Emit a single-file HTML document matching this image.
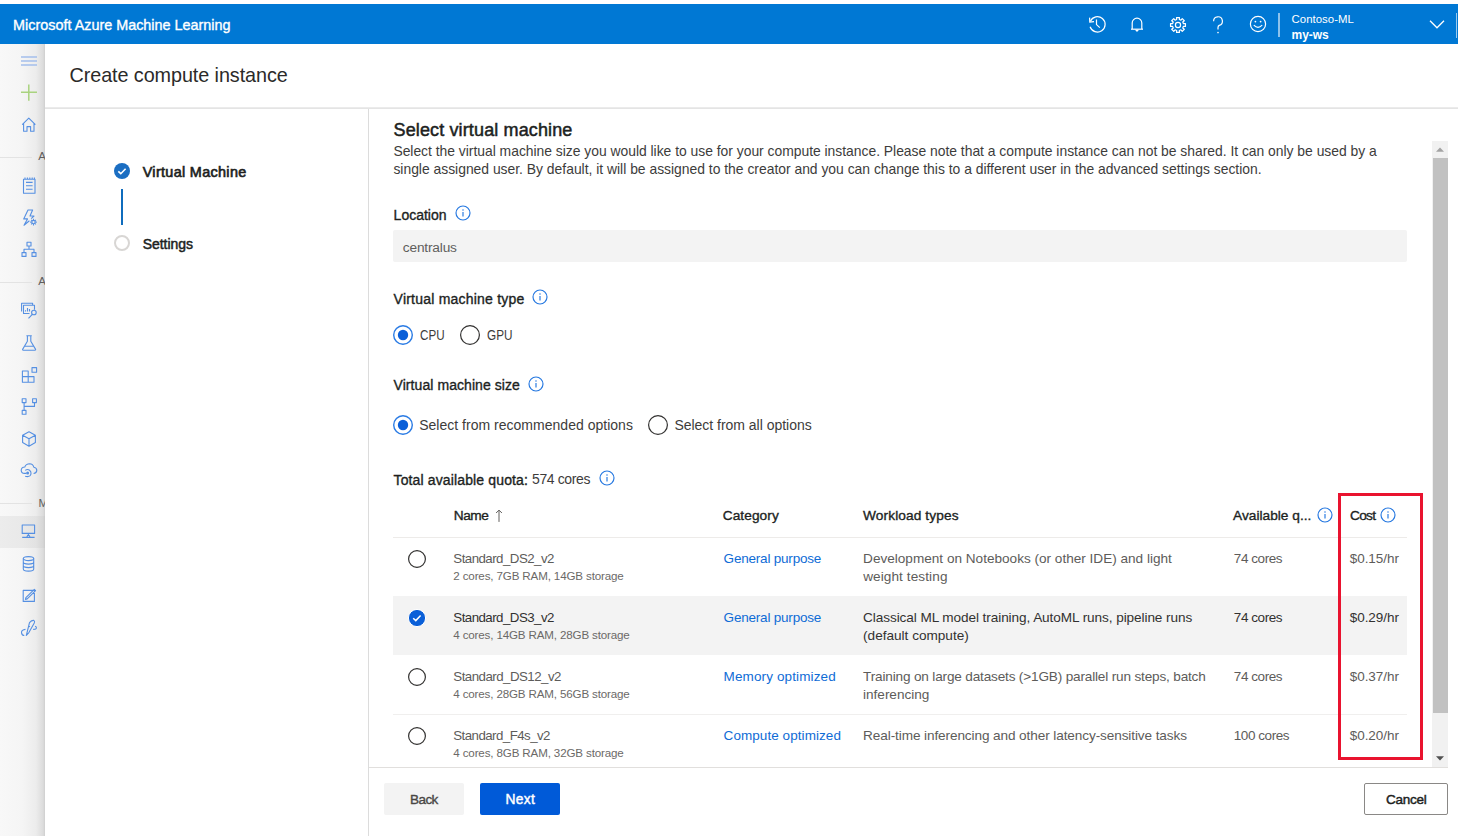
<!DOCTYPE html>
<html><head><meta charset="utf-8">
<style>
*{box-sizing:border-box;margin:0;padding:0}
html,body{width:1458px;height:836px;overflow:hidden;background:#fff;font-family:"Liberation Sans",sans-serif;color:#323130}
.t{position:absolute;white-space:nowrap}
.b{position:absolute}
svg{position:absolute;overflow:visible}
</style></head><body>
<div class="b" style="left:0;top:4px;width:1458px;height:40px;background:#0078d4"></div>
<div class="t" style="left:13.10px;top:18.31px;font-size:14.4px;line-height:14.4px;letter-spacing:-0.004px;-webkit-text-stroke:0.35px #fff;color:#fff;">Microsoft Azure Machine Learning</div>
<svg style="left:1087px;top:13.4px" width="22" height="22" viewBox="0 0 22 22" fill="none" stroke="#fff" stroke-width="1.2">
<path d="M3.4 8.2 A7.7 7.7 0 1 1 3.1 13.8"/><path d="M2.6 4.6 L2.8 9 L7 8.6" stroke-linejoin="miter"/><path d="M9.5 6.5 V11.6 L12.8 14.6"/></svg>
<svg style="left:1129px;top:15px" width="16" height="20" viewBox="0 0 16 20" fill="none" stroke="#fff" stroke-width="1.2">
<path d="M3.2 14 V8 A4.8 4.8 0 0 1 12.8 8 V14"/><path d="M2 14.2 H14"/><path d="M6.6 14.6 L8 16.2 L9.4 14.6"/></svg>
<svg style="left:1168.3px;top:14.8px" width="20" height="20" viewBox="0 0 20 20" fill="none" stroke="#fff" stroke-width="1.2" stroke-linejoin="round">
<path d="M17.46 8.55 L17.46 11.45 L15.45 11.31 L14.77 12.93 L16.30 14.25 L14.25 16.30 L12.93 14.77 L11.31 15.45 L11.45 17.46 L8.55 17.46 L8.69 15.45 L7.07 14.77 L5.75 16.30 L3.70 14.25 L5.23 12.93 L4.55 11.31 L2.54 11.45 L2.54 8.55 L4.55 8.69 L5.23 7.07 L3.70 5.75 L5.75 3.70 L7.07 5.23 L8.69 4.55 L8.55 2.54 L11.45 2.54 L11.31 4.55 L12.93 5.23 L14.25 3.70 L16.30 5.75 L14.77 7.07 L15.45 8.69 Z"/><circle cx="10" cy="10" r="2.6"/></svg>
<svg style="left:1210px;top:15px" width="16" height="20" viewBox="0 0 16 20" fill="none" stroke="#fff" stroke-width="1.2">
<path d="M3.6 6.2 A4.4 4.4 0 1 1 9.2 10.4 Q8 11 8 12.6 V14.6"/><circle cx="8" cy="17.6" r="0.8" fill="#fff" stroke="none"/></svg>
<svg style="left:1248.2px;top:14.2px" width="20" height="20" viewBox="0 0 20 20" fill="none" stroke="#fff" stroke-width="1.2">
<circle cx="10" cy="10" r="7.6"/><circle cx="7.4" cy="7.6" r="0.9" fill="#fff" stroke="none"/><circle cx="12.6" cy="7.6" r="0.9" fill="#fff" stroke="none"/><path d="M5.8 11.2 Q10 15.4 14.2 11.2"/></svg>
<div class="b" style="left:1278px;top:12.5px;width:1.5px;height:24px;background:rgba(255,255,255,0.55)"></div>
<div class="t" style="left:1291.60px;top:14.25px;font-size:11.4px;line-height:11.4px;letter-spacing:0.022px;color:#fff;">Contoso-ML</div>
<div class="t" style="left:1291.60px;top:29.14px;font-size:12px;line-height:12px;letter-spacing:-0.088px;font-weight:bold;color:#fff;">my-ws</div>
<svg style="left:1428px;top:18px" width="18" height="12" viewBox="0 0 18 12" fill="none" stroke="#fff" stroke-width="1.3"><path d="M2 2.8 L9 9.8 L16 2.8"/></svg>
<div class="b" style="left:1456px;top:12.5px;width:1.2px;height:25px;background:rgba(255,255,255,0.6)"></div>
<div class="b" style="left:0;top:0;width:45px;height:836px;overflow:hidden">
<div class="b" style="left:0;top:44px;width:45px;height:792px;background:linear-gradient(to right,#f8f8f8 0px,#f5f5f5 22px,#ececec 36px,#dcdcdc 43px,#cfcfcf 45px)"></div>
<div class="b" style="left:0;top:516px;width:45px;height:32px;background:linear-gradient(to right,#ececec 0px,#e9e9e9 22px,#e2e2e2 36px,#d6d6d6 43px,#cacaca 45px)"></div>
<div class="b" style="left:0;top:157px;width:32px;height:1px;background:#e3e3e3"></div>
<div class="b" style="left:0;top:282px;width:32px;height:1px;background:#e3e3e3"></div>
<div class="b" style="left:0;top:503px;width:32px;height:1px;background:#e3e3e3"></div>
<div class="t" style="left:38.20px;top:151.07px;font-size:11.5px;line-height:11.5px;letter-spacing:0.000px;color:#605e5c;">A</div>
<div class="t" style="left:38.20px;top:276.07px;font-size:11.5px;line-height:11.5px;letter-spacing:0.000px;color:#605e5c;">A</div>
<div class="t" style="left:38.60px;top:497.77px;font-size:11.5px;line-height:11.5px;letter-spacing:0.000px;color:#605e5c;">M</div>
<svg style="left:20px;top:52px" width="18" height="16" viewBox="0 0 18 16" stroke="#a4bfeb" stroke-width="1.5"><path d="M1 4.9 H17 M1 8.9 H17 M1 12.9 H17"/></svg>
<svg style="left:20px;top:84px" width="18" height="18" viewBox="0 0 18 18" stroke="#a9d37f" stroke-width="1.5"><path d="M1 8.3 H17 M8.8 0.6 V16.7"/></svg>
<svg style="left:20px;top:116px" width="18" height="18" viewBox="0 0 18 18" fill="none" stroke="#5690e2" stroke-width="1.1" stroke-linejoin="round"><path d="M2.2 8.6 L8.8 2.2 L15.4 8.6 M3.6 7.4 V15.2 H7 V10.6 H10.6 V15.2 H14 V7.4"/></svg>
<svg style="left:20px;top:176px" width="18" height="20" viewBox="0 0 18 20" fill="none" stroke="#5690e2" stroke-width="1.1" stroke-linejoin="round"><path d="M3.5 3.2 H15 V17.2 H3.5 Z M6 6.4 H12.6 M6 9.8 H12.6 M6 13.2 H12.6 M5 1.6 V3.2 M7.4 1.6 V3.2 M9.8 1.6 V3.2 M12.2 1.6 V3.2 M14.4 1.6 V3.2"/></svg>
<svg style="left:20px;top:208px" width="20" height="20" viewBox="0 0 20 20" fill="none" stroke="#5690e2" stroke-width="1.1" stroke-linejoin="round"><path d="M11.2 10.6 L14 8 H10 L12.6 2 H8 L3.7 10.9 H7.5 L4 17.2 L9.4 12.8"/><circle cx="13.5" cy="14.1" r="1.7"/><path d="M13.5 10.8 V12.2 M13.5 16 V17.4 M10.2 14.1 H11.6 M15.4 14.1 H16.8 M11.2 11.8 L12.2 12.8 M14.8 15.4 L15.8 16.4 M11.2 16.4 L12.2 15.4 M14.8 12.8 L15.8 11.8"/></svg>
<svg style="left:20px;top:240px" width="18" height="18" viewBox="0 0 18 18" fill="none" stroke="#5690e2" stroke-width="1.1" stroke-linejoin="round"><path d="M7 2.2 H11 V6 H7 Z M2 12.6 H6 V16.4 H2 Z M12 12.6 H16 V16.4 H12 Z M9 6 V9.2 M4 12.6 V9.2 H14 V12.6"/></svg>
<svg style="left:20px;top:301px" width="19" height="19" viewBox="0 0 19 19" fill="none" stroke="#5690e2" stroke-width="1.1" stroke-linejoin="round"><path d="M1.6 10.4 V2.3 H12.6 V4.2 M9.5 12.5 H3.5 V4.3 H14.5 V8.8 M5.5 10.5 V9.2 M7.5 10.5 V7 M9.5 10.5 V8.1"/><circle cx="13.9" cy="11.5" r="2.3"/><path d="M12.3 13.3 L8.5 17.3"/></svg>
<svg style="left:20px;top:334px" width="18" height="18" viewBox="0 0 18 18" fill="none" stroke="#5690e2" stroke-width="1.1" stroke-linejoin="round"><path d="M6.4 1.8 H11.8 M7.4 1.8 V7.2 L2.6 15.4 Q2.4 16.2 3.2 16.2 H15 Q15.8 16.2 15.6 15.4 L10.8 7.2 V1.8 M4.6 12.2 H13.6"/></svg>
<svg style="left:20px;top:366px" width="18" height="18" viewBox="0 0 18 18" fill="none" stroke="#5690e2" stroke-width="1.1" stroke-linejoin="round"><path d="M2.4 5 H8.2 V16.2 H2.4 Z M2.4 10.6 H14 V16.2 H8.2 M12 1.6 H16.6 V6.2 H12 Z"/></svg>
<svg style="left:20px;top:397px" width="18" height="19" viewBox="0 0 18 19" fill="none" stroke="#5690e2" stroke-width="1.1" stroke-linejoin="round"><path d="M2.2 1.8 H6 V5.6 H2.2 Z M12.6 1.8 H16.4 V5.6 H12.6 Z M2.2 13.4 H6 V17.2 H2.2 Z M4.1 5.6 V13.4 M4.1 9.4 H14.5 V5.6"/></svg>
<svg style="left:20px;top:430px" width="18" height="18" viewBox="0 0 18 18" fill="none" stroke="#5690e2" stroke-width="1.1" stroke-linejoin="round"><path d="M9 1.8 L15.4 5.2 V12.6 L9 16.2 L2.6 12.6 V5.2 Z M2.6 5.2 L9 8.8 L15.4 5.2 M9 8.8 V16.2"/></svg>
<svg style="left:20px;top:461px" width="19" height="19" viewBox="0 0 19 19" fill="none" stroke="#5690e2" stroke-width="1.1" stroke-linejoin="round"><path d="M6.3 12.4 H4.6 Q1.2 12.2 1.2 9.2 Q1.4 6.2 4.8 6 Q6 2.8 9.6 2.8 Q13 2.9 13.8 6.2 Q16.8 6.6 16.8 9.4 Q16.6 12.3 13.6 12.5"/><path d="M5.2 9.4 Q7.4 7.8 9.6 9.2 Q11.4 10.6 11 13 Q10.4 15.6 7.4 15.6 Q6 15.6 5.2 15.2"/><circle cx="7.6" cy="12.1" r="1.5" fill="#5690e2" stroke="none"/></svg>
<svg style="left:20px;top:523px" width="18" height="18" viewBox="0 0 18 18" fill="none" stroke="#5690e2" stroke-width="1.1" stroke-linejoin="round"><path d="M2.2 2 H14.6 V10.4 H2.2 Z M8.4 10.4 V12.4 M6.6 14.4 L7.6 12.4 H9.2 L10.2 14.4 Z M2.2 14.4 H6.6 M10.2 14.4 H14.6"/></svg>
<svg style="left:20px;top:555px" width="18" height="18" viewBox="0 0 18 18" fill="none" stroke="#5690e2" stroke-width="1.1" stroke-linejoin="round"><ellipse cx="8.5" cy="3.6" rx="5.2" ry="2"/><path d="M3.3 3.6 V14 Q3.3 16.1 8.5 16.1 Q13.7 16.1 13.7 14 V3.6 M3.3 7.1 Q3.3 9.1 8.5 9.1 Q13.7 9.1 13.7 7.1 M3.3 10.6 Q3.3 12.6 8.5 12.6 Q13.7 12.6 13.7 10.6"/></svg>
<svg style="left:20px;top:587px" width="18" height="18" viewBox="0 0 18 18" fill="none" stroke="#5690e2" stroke-width="1.1" stroke-linejoin="round"><path d="M3.2 3.4 H14.4 V14.4 H3.2 Z M5.4 12.4 L5.9 10.6 L14.3 2.3 L15.6 3.6 L7.2 11.9 Z"/></svg>
<svg style="left:19px;top:618px" width="20" height="20" viewBox="0 0 20 20" fill="none" stroke="#5690e2" stroke-width="1.1" stroke-linejoin="round"><path d="M7.3 17.5 L10.5 4.6 Q12.6 2.2 14.8 2.4 Q16 3.2 15.4 4.8 L9.9 14.6 Z M9.6 8.2 L11 8.8"/><path d="M6.5 11.4 Q2.5 11.8 2.5 14.6 Q2.8 17.4 5.3 17.5 M14.2 11.4 Q17.6 11.6 17.4 9.6 Q17.2 8.4 16 8.2"/></svg>
</div>
<div class="t" style="left:69.50px;top:65.84px;font-size:19.8px;line-height:19.8px;letter-spacing:-0.074px;color:#2b2a29;">Create compute instance</div>
<div class="b" style="left:45px;top:107px;width:1413px;height:1px;background:#ebebeb"></div>
<div class="b" style="left:45px;top:108px;width:1413px;height:1px;background:#e4e4e4"></div>
<div class="b" style="left:368px;top:109px;width:1px;height:727px;background:#dcdcdc"></div>
<svg style="left:114px;top:162.5px" width="16" height="16" viewBox="0 0 16 16"><circle cx="8" cy="8" r="8" fill="#1b6ec2"/><path d="M4.3 8.3 L6.8 10.7 L11.6 5.7" fill="none" stroke="#fff" stroke-width="1.6"/></svg>
<div class="b" style="left:121px;top:189px;width:2px;height:36px;background:#0f6cbd"></div>
<div class="b" style="left:114px;top:235.4px;width:16px;height:16px;border-radius:50%;border:2px solid #d8d6d4"></div>
<div class="t" style="left:142.70px;top:164.91px;font-size:14.4px;line-height:14.4px;letter-spacing:0.329px;-webkit-text-stroke:0.65px #201f1e;color:#201f1e;">Virtual Machine</div>
<div class="t" style="left:142.70px;top:237.35px;font-size:14px;line-height:14px;letter-spacing:-0.039px;-webkit-text-stroke:0.5px #201f1e;color:#201f1e;">Settings</div>
<div class="t" style="left:393.60px;top:120.86px;font-size:18px;line-height:18px;letter-spacing:0.125px;-webkit-text-stroke:0.5px #201f1e;color:#201f1e;">Select virtual machine</div>
<div class="t" style="left:393.40px;top:144.73px;font-size:13.9px;line-height:13.9px;letter-spacing:-0.017px;color:#3d3c3b;">Select the virtual machine size you would like to use for your compute instance. Please note that a compute instance can not be shared. It can only be used by a</div>
<div class="t" style="left:393.40px;top:162.83px;font-size:13.9px;line-height:13.9px;letter-spacing:-0.007px;color:#3d3c3b;">single assigned user. By default, it will be assigned to the creator and you can change this to a different user in the advanced settings section.</div>
<div class="t" style="left:393.60px;top:207.95px;font-size:14px;line-height:14px;letter-spacing:-0.003px;-webkit-text-stroke:0.35px #201f1e;color:#201f1e;">Location</div>
<svg style="left:455.0px;top:205.0px" width="16" height="16" viewBox="0 0 16 16" fill="none" stroke="#2477e0" stroke-width="1.15"><circle cx="8" cy="8" r="7"/><path d="M8 7 V11.4"/><circle cx="8" cy="4.9" r="0.75" fill="#2477e0" stroke="none"/></svg>
<div class="b" style="left:393px;top:229.5px;width:1014px;height:32px;background:#f3f3f3;border-radius:2px"></div>
<div class="t" style="left:402.80px;top:240.50px;font-size:13.7px;line-height:13.7px;letter-spacing:-0.173px;color:#605e5c;">centralus</div>
<div class="t" style="left:393.60px;top:291.75px;font-size:14px;line-height:14px;letter-spacing:0.216px;-webkit-text-stroke:0.35px #201f1e;color:#201f1e;">Virtual machine type</div>
<svg style="left:532.4px;top:289.3px" width="16" height="16" viewBox="0 0 16 16" fill="none" stroke="#2477e0" stroke-width="1.15"><circle cx="8" cy="8" r="7"/><path d="M8 7 V11.4"/><circle cx="8" cy="4.9" r="0.75" fill="#2477e0" stroke="none"/></svg>
<svg style="left:393.0px;top:324.6px" width="20" height="20" viewBox="0 0 20 20"><circle cx="10" cy="10" r="9.3" fill="#fff" stroke="#2a7be4" stroke-width="1.4"/><circle cx="10" cy="10" r="5.2" fill="#0a5fd8"/></svg>
<div class="t" style="left:419.80px;top:328.72px;font-size:13.8px;line-height:13.8px;letter-spacing:0.000px;color:#3d3c3b;transform:scaleX(0.8438);transform-origin:0.00px 0;">CPU</div>
<svg style="left:460.0px;top:324.6px" width="20" height="20" viewBox="0 0 20 20"><circle cx="10.0" cy="10.0" r="9.4" fill="#fff" stroke="#323130" stroke-width="1.2"/></svg>
<div class="t" style="left:486.80px;top:328.72px;font-size:13.8px;line-height:13.8px;letter-spacing:0.000px;color:#3d3c3b;transform:scaleX(0.8525);transform-origin:0.00px 0;">GPU</div>
<div class="t" style="left:393.50px;top:377.95px;font-size:14px;line-height:14px;letter-spacing:0.073px;-webkit-text-stroke:0.35px #201f1e;color:#201f1e;">Virtual machine size</div>
<svg style="left:528.4px;top:375.8px" width="16" height="16" viewBox="0 0 16 16" fill="none" stroke="#2477e0" stroke-width="1.15"><circle cx="8" cy="8" r="7"/><path d="M8 7 V11.4"/><circle cx="8" cy="4.9" r="0.75" fill="#2477e0" stroke="none"/></svg>
<svg style="left:393.0px;top:415.0px" width="20" height="20" viewBox="0 0 20 20"><circle cx="10" cy="10" r="9.3" fill="#fff" stroke="#2a7be4" stroke-width="1.4"/><circle cx="10" cy="10" r="5.2" fill="#0a5fd8"/></svg>
<div class="t" style="left:419.20px;top:418.25px;font-size:14px;line-height:14px;letter-spacing:0.016px;color:#3d3c3b;">Select from recommended options</div>
<svg style="left:648.0px;top:415.0px" width="20" height="20" viewBox="0 0 20 20"><circle cx="10.0" cy="10.0" r="9.4" fill="#fff" stroke="#323130" stroke-width="1.2"/></svg>
<div class="t" style="left:674.40px;top:418.25px;font-size:14px;line-height:14px;letter-spacing:-0.019px;color:#3d3c3b;">Select from all options</div>
<div class="t" style="left:393.50px;top:472.65px;font-size:14px;line-height:14px;letter-spacing:0.137px;-webkit-text-stroke:0.35px #201f1e;color:#201f1e;">Total available quota:</div>
<div class="t" style="left:532.00px;top:472.35px;font-size:14px;line-height:14px;letter-spacing:-0.387px;color:#3d3c3b;">574 cores</div>
<svg style="left:598.5px;top:470.0px" width="16" height="16" viewBox="0 0 16 16" fill="none" stroke="#2477e0" stroke-width="1.15"><circle cx="8" cy="8" r="7"/><path d="M8 7 V11.4"/><circle cx="8" cy="4.9" r="0.75" fill="#2477e0" stroke="none"/></svg>
<div class="t" style="left:453.70px;top:508.60px;font-size:13.7px;line-height:13.7px;letter-spacing:-0.415px;-webkit-text-stroke:0.35px #201f1e;color:#201f1e;">Name</div>
<svg style="left:494px;top:508px" width="10" height="16" viewBox="0 0 10 16" fill="none" stroke="#605e5c" stroke-width="1"><path d="M5 2.2 V13.9 M2.1 5 L5 2.1 L7.9 5"/></svg>
<div class="t" style="left:722.70px;top:508.60px;font-size:13.7px;line-height:13.7px;letter-spacing:0.073px;-webkit-text-stroke:0.35px #201f1e;color:#201f1e;">Category</div>
<div class="t" style="left:863.10px;top:508.60px;font-size:13.7px;line-height:13.7px;letter-spacing:0.101px;-webkit-text-stroke:0.35px #201f1e;color:#201f1e;">Workload types</div>
<div class="t" style="left:1233.00px;top:508.60px;font-size:13.7px;line-height:13.7px;letter-spacing:0.016px;-webkit-text-stroke:0.35px #201f1e;color:#201f1e;">Available q...</div>
<svg style="left:1317.0px;top:507.3px" width="16" height="16" viewBox="0 0 16 16" fill="none" stroke="#2477e0" stroke-width="1.15"><circle cx="8" cy="8" r="7"/><path d="M8 7 V11.4"/><circle cx="8" cy="4.9" r="0.75" fill="#2477e0" stroke="none"/></svg>
<div class="t" style="left:1350.00px;top:508.60px;font-size:13.7px;line-height:13.7px;letter-spacing:-0.718px;-webkit-text-stroke:0.35px #201f1e;color:#201f1e;">Cost</div>
<svg style="left:1379.6px;top:507.3px" width="16" height="16" viewBox="0 0 16 16" fill="none" stroke="#2477e0" stroke-width="1.15"><circle cx="8" cy="8" r="7"/><path d="M8 7 V11.4"/><circle cx="8" cy="4.9" r="0.75" fill="#2477e0" stroke="none"/></svg>
<div class="b" style="left:393px;top:537px;width:1014px;height:1px;background:#edebe9"></div>
<div class="b" style="left:393px;top:596px;width:1014px;height:59px;background:#f3f3f3"></div>
<div class="b" style="left:393px;top:714px;width:1014px;height:1px;background:#f0efee"></div>
<svg style="left:408.0px;top:549.8px" width="18" height="18" viewBox="0 0 18 18"><circle cx="9.0" cy="9.0" r="8.4" fill="#fff" stroke="#323130" stroke-width="1.2"/></svg>
<div class="t" style="left:453.30px;top:551.84px;font-size:13.3px;line-height:13.3px;letter-spacing:-0.535px;color:#5d5c5a;">Standard_DS2_v2</div>
<div class="t" style="left:453.30px;top:569.98px;font-size:11.6px;line-height:11.6px;letter-spacing:-0.142px;color:#6b6967;">2 cores, 7GB RAM, 14GB storage</div>
<div class="t" style="left:723.60px;top:551.67px;font-size:13.5px;line-height:13.5px;letter-spacing:-0.205px;color:#0f6cd6;">General purpose</div>
<div class="t" style="left:863.10px;top:551.59px;font-size:13.6px;line-height:13.6px;letter-spacing:-0.006px;color:#5d5c5a;">Development on Notebooks (or other IDE) and light</div>
<div class="t" style="left:863.13px;top:569.59px;font-size:13.6px;line-height:13.6px;letter-spacing:0.092px;color:#5d5c5a;">weight testing</div>
<div class="t" style="left:1233.80px;top:551.67px;font-size:13.5px;line-height:13.5px;letter-spacing:-0.425px;color:#5d5c5a;">74 cores</div>
<div class="t" style="left:1349.80px;top:551.67px;font-size:13.5px;line-height:13.5px;letter-spacing:-0.064px;color:#5d5c5a;">$0.15/hr</div>
<svg style="left:407px;top:607.9px" width="20" height="20" viewBox="0 0 20 20"><circle cx="10" cy="10" r="8.6" fill="#0a5fd8" stroke="#fff" stroke-width="1"/><path d="M6.2 10.2 L8.8 12.6 L13.6 7.6" fill="none" stroke="#fff" stroke-width="1.5"/></svg>
<div class="t" style="left:453.30px;top:610.94px;font-size:13.3px;line-height:13.3px;letter-spacing:-0.535px;color:#323130;">Standard_DS3_v2</div>
<div class="t" style="left:453.30px;top:629.08px;font-size:11.6px;line-height:11.6px;letter-spacing:-0.152px;color:#6b6967;">4 cores, 14GB RAM, 28GB storage</div>
<div class="t" style="left:723.60px;top:610.77px;font-size:13.5px;line-height:13.5px;letter-spacing:-0.205px;color:#0f6cd6;">General purpose</div>
<div class="t" style="left:863.10px;top:610.69px;font-size:13.6px;line-height:13.6px;letter-spacing:-0.085px;color:#323130;">Classical ML model training, AutoML runs, pipeline runs</div>
<div class="t" style="left:863.10px;top:628.69px;font-size:13.6px;line-height:13.6px;letter-spacing:-0.009px;color:#323130;">(default compute)</div>
<div class="t" style="left:1233.80px;top:610.77px;font-size:13.5px;line-height:13.5px;letter-spacing:-0.425px;color:#323130;">74 cores</div>
<div class="t" style="left:1349.80px;top:610.77px;font-size:13.5px;line-height:13.5px;letter-spacing:-0.064px;color:#323130;">$0.29/hr</div>
<svg style="left:408.0px;top:668.0px" width="18" height="18" viewBox="0 0 18 18"><circle cx="9.0" cy="9.0" r="8.4" fill="#fff" stroke="#323130" stroke-width="1.2"/></svg>
<div class="t" style="left:453.30px;top:670.04px;font-size:13.3px;line-height:13.3px;letter-spacing:-0.527px;color:#5d5c5a;">Standard_DS12_v2</div>
<div class="t" style="left:453.30px;top:688.18px;font-size:11.6px;line-height:11.6px;letter-spacing:-0.152px;color:#6b6967;">4 cores, 28GB RAM, 56GB storage</div>
<div class="t" style="left:723.60px;top:669.87px;font-size:13.5px;line-height:13.5px;letter-spacing:0.120px;color:#0f6cd6;">Memory optimized</div>
<div class="t" style="left:863.10px;top:669.79px;font-size:13.6px;line-height:13.6px;letter-spacing:-0.173px;color:#5d5c5a;">Training on large datasets (&gt;1GB) parallel run steps, batch</div>
<div class="t" style="left:863.10px;top:687.79px;font-size:13.6px;line-height:13.6px;letter-spacing:-0.034px;color:#5d5c5a;">inferencing</div>
<div class="t" style="left:1233.80px;top:669.87px;font-size:13.5px;line-height:13.5px;letter-spacing:-0.425px;color:#5d5c5a;">74 cores</div>
<div class="t" style="left:1349.80px;top:669.87px;font-size:13.5px;line-height:13.5px;letter-spacing:-0.064px;color:#5d5c5a;">$0.37/hr</div>
<svg style="left:408.0px;top:727.1px" width="18" height="18" viewBox="0 0 18 18"><circle cx="9.0" cy="9.0" r="8.4" fill="#fff" stroke="#323130" stroke-width="1.2"/></svg>
<div class="t" style="left:453.30px;top:729.14px;font-size:13.3px;line-height:13.3px;letter-spacing:-0.557px;color:#5d5c5a;">Standard_F4s_v2</div>
<div class="t" style="left:453.30px;top:747.28px;font-size:11.6px;line-height:11.6px;letter-spacing:-0.142px;color:#6b6967;">4 cores, 8GB RAM, 32GB storage</div>
<div class="t" style="left:723.60px;top:728.97px;font-size:13.5px;line-height:13.5px;letter-spacing:0.062px;color:#0f6cd6;">Compute optimized</div>
<div class="t" style="left:863.10px;top:728.89px;font-size:13.6px;line-height:13.6px;letter-spacing:-0.102px;color:#5d5c5a;">Real-time inferencing and other latency-sensitive tasks</div>
<div class="t" style="left:1233.80px;top:728.97px;font-size:13.5px;line-height:13.5px;letter-spacing:-0.450px;color:#5d5c5a;">100 cores</div>
<div class="t" style="left:1349.80px;top:728.97px;font-size:13.5px;line-height:13.5px;letter-spacing:-0.064px;color:#5d5c5a;">$0.20/hr</div>
<div class="b" style="left:1338px;top:493px;width:85px;height:267px;border:3px solid #e9132f"></div>
<div class="b" style="left:1432px;top:141px;width:16px;height:627px;background:#f1f1f1"></div>
<div class="b" style="left:1432.5px;top:157.5px;width:15px;height:555px;background:#c1c1c1"></div>
<svg style="left:1432px;top:141px" width="16" height="16" viewBox="0 0 16 16"><path d="M4 10.8 L8 6.6 L12 10.8 Z" fill="#a3a3a3"/></svg>
<svg style="left:1432px;top:751px" width="16" height="16" viewBox="0 0 16 16"><path d="M4 5.2 L8 9.4 L12 5.2 Z" fill="#505050"/></svg>
<div class="b" style="left:369px;top:767px;width:1079px;height:1px;background:#e1dfdd"></div>
<div class="b" style="left:384px;top:783px;width:80px;height:32px;background:#f3f3f3;border-radius:2px"></div>
<div class="t" style="left:410.00px;top:792.87px;font-size:13.5px;line-height:13.5px;letter-spacing:-0.546px;-webkit-text-stroke:0.35px #484644;color:#484644;">Back</div>
<div class="b" style="left:480px;top:783px;width:80px;height:32px;background:#005ad8;border-radius:2px"></div>
<div class="t" style="left:505.60px;top:793.12px;font-size:13.8px;line-height:13.8px;letter-spacing:0.280px;-webkit-text-stroke:0.45px #fff;color:#fff;">Next</div>
<div class="b" style="left:1364px;top:783px;width:84px;height:32px;border:1px solid #8a8886;border-radius:2px"></div>
<div class="t" style="left:1385.90px;top:792.97px;font-size:13.5px;line-height:13.5px;letter-spacing:-0.244px;-webkit-text-stroke:0.45px #201f1e;color:#201f1e;">Cancel</div>
</body></html>
